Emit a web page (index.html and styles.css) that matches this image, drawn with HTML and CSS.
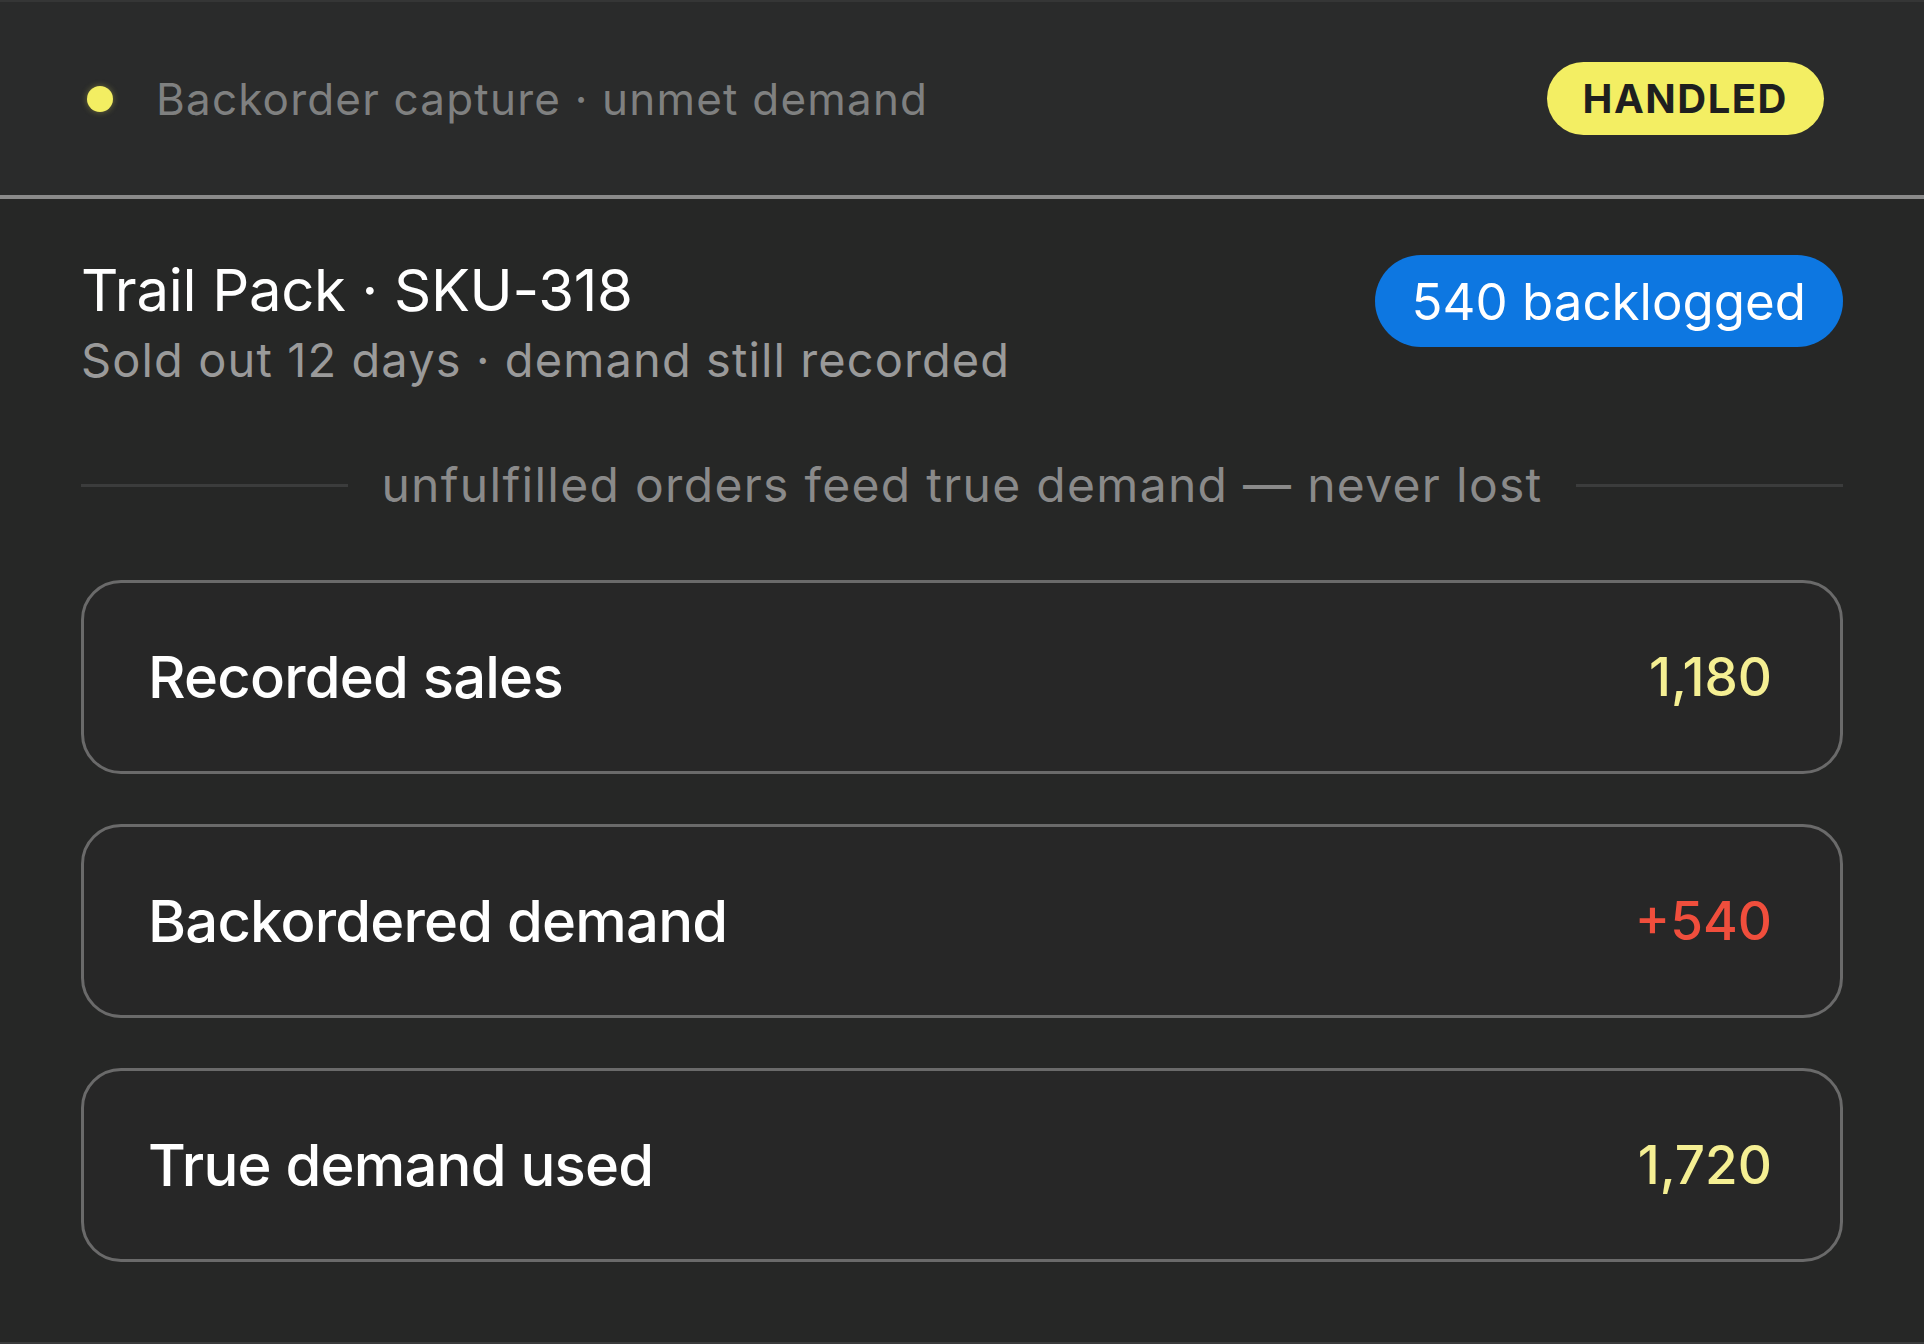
FILE: index.html
```html
<!DOCTYPE html>
<html lang="en">
<head>
<meta charset="utf-8">
<title>Backorder capture</title>
<link rel="stylesheet" href="styles.css">
</head>
<body>
<div class="panel">
  <header class="topbar">
    <div class="topbar-left">
      <span class="dot"></span>
      <span class="topbar-title">Backorder capture · unmet demand</span>
    </div>
    <span class="status">HANDLED</span>
  </header>
  <main class="content">
    <section class="product">
      <div class="product-info">
        <div class="product-name">Trail Pack · SKU-318</div>
        <div class="product-sub">Sold out 12 days · demand still recorded</div>
      </div>
      <span class="pill">540 backlogged</span>
    </section>
    <div class="divider">
      <span class="divider-line"></span>
      <span class="divider-text">unfulfilled orders feed true demand — never lost</span>
      <span class="divider-line"></span>
    </div>
    <ul class="rows">
      <li class="row"><span class="row-label">Recorded sales</span><span class="row-value">1,180</span></li>
      <li class="row"><span class="row-label">Backordered demand</span><span class="row-value red">+540</span></li>
      <li class="row"><span class="row-label">True demand used</span><span class="row-value">1,720</span></li>
    </ul>
  </main>
</div>
</body>
</html>
```
FILE: styles.css
```css
* { box-sizing: border-box; }
html, body { margin: 0; padding: 0; }
body {
  background: #262726;
  font-family: "Inter", "Liberation Sans", sans-serif;
  color: #ffffff;
}
.panel {
  height: 1344px;
  border-top: 2px solid #353636;
  border-bottom: 2px solid #3a3b3b;
  background: #262726;
  display: flex;
  flex-direction: column;
}
.topbar {
  height: 197px;
  background: #2a2b2b;
  border-bottom: 4px solid #8a8a8a;
  display: flex;
  align-items: center;
  justify-content: space-between;
  padding: 0 100px 0 87px;
}
.topbar-left {
  display: flex;
  align-items: center;
  gap: 43px;
}
.dot {
  width: 26px;
  height: 26px;
  border-radius: 50%;
  background: #f3ee62;
  box-shadow: 0 0 6px rgba(243, 238, 98, 0.35);
}
.topbar-title {
  font-size: 44px;
  color: #7f8080;
  letter-spacing: 1.2px;
}
.status {
  height: 73px;
  padding: 0 36px;
  border-radius: 37px;
  background: #f3ee63;
  color: #1e1f1f;
  font-weight: 700;
  font-size: 40px;
  letter-spacing: 1.5px;
  display: flex;
  align-items: center;
}
.content {
  padding: 0 81px;
  display: flex;
  flex-direction: column;
}
.product {
  display: flex;
  justify-content: space-between;
  align-items: flex-start;
  padding-top: 56px;
}
.product-info {
  display: flex;
  flex-direction: column;
}
.product-name {
  font-size: 58px;
  line-height: 70px;
  letter-spacing: -0.3px;
  color: #ffffff;
}
.product-sub {
  margin-top: 7px;
  font-size: 47px;
  line-height: 56px;
  letter-spacing: 1.1px;
  color: #9a9a9a;
}
.pill {
  height: 92px;
  padding: 0 37px;
  border-radius: 46px;
  background: #0d77e1;
  color: #ffffff;
  font-size: 51px;
  display: flex;
  align-items: center;
}
.divider {
  margin-top: 68px;
  display: flex;
  align-items: center;
  gap: 33px;
}
.divider-line {
  flex: 1;
  height: 3px;
  background: #3b3c3c;
}
.divider-text {
  font-size: 48px;
  line-height: 58px;
  letter-spacing: 1.3px;
  color: #8a8a8a;
}
.rows {
  list-style: none;
  margin: 66px 0 0;
  padding: 0;
  display: flex;
  flex-direction: column;
  gap: 50px;
}
.row {
  height: 194px;
  border: 3px solid #6a6a6a;
  border-radius: 40px;
  background: #272727;
  display: flex;
  align-items: center;
  justify-content: space-between;
  padding: 0 68px 0 64px;
}
.row-label {
  font-size: 58px;
  font-weight: 500;
  letter-spacing: -0.8px;
  color: #ffffff;
}
.row-value {
  font-size: 53px;
  font-weight: 500;
  color: #f5ef93;
}
.row-value.red { color: #f04e3c; }
```
